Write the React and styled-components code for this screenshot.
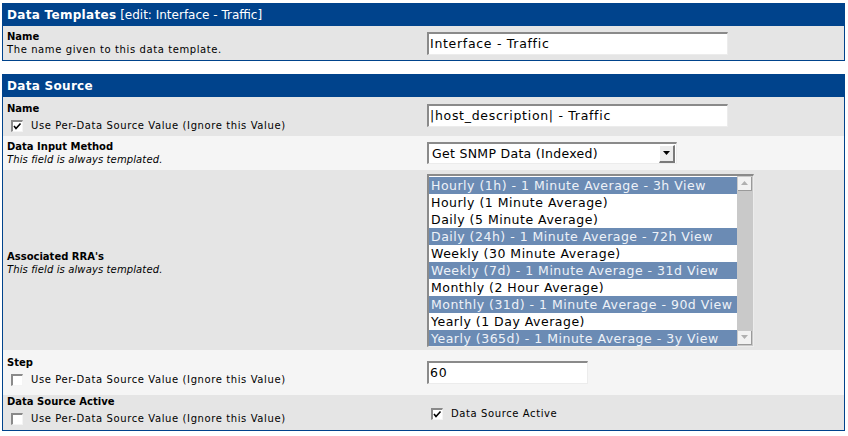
import React from "react";
import styled, { createGlobalStyle } from "styled-components";

const Global = createGlobalStyle`
  html, body { margin: 0; padding: 0; background: #fff; }
  body { font-family: "DejaVu Sans", Verdana, sans-serif; color: #000; }
`;

const Page = styled.div`
  padding: 3px 3px 0 2px;
  display: flex;
  flex-direction: column;
  gap: 13px;
`;

const Panel = styled.div`
  border: 1px solid #00438c;
  display: flex;
  flex-direction: column;
`;

const Header = styled.div`
  background: #00438c;
  color: #fff;
  height: 22px;
  line-height: 22px;
  padding-left: 4px;
  font-size: 12px;
  white-space: nowrap;
  b { font-weight: bold; letter-spacing: 0.3px; }
`;

const Row = styled.div`
  display: grid;
  grid-template-columns: 421px 1fr;
  background: ${(p) => (p.$light ? "#f5f5f5" : "#e5e5e5")};
  height: ${(p) => p.$h}px;
`;

const LabelCell = styled.div`
  padding: ${(p) => p.$pt || 5}px 0 0 4px;
  display: flex;
  flex-direction: column;
  justify-content: ${(p) => (p.$center ? "center" : "flex-start")};
  font-size: 10px;
  line-height: 12px;
`;

const FieldCell = styled.div`
  display: flex;
  align-items: ${(p) => p.$align || "center"};
  padding-left: 3px;
  padding-top: ${(p) => p.$pt || 0}px;
`;

const Title = styled.div`
  font-weight: bold;
`;

const Desc = styled.div`
  font-style: ${(p) => (p.$italic ? "italic" : "normal")};
  letter-spacing: ${(p) => (p.$italic ? "0.12px" : "0.6px")};
  margin-top: 1px;
`;

const CheckLine = styled.label`
  display: flex;
  align-items: center;
  gap: 8px;
  margin: ${(p) => p.$m || "5px 0 0 4px"};
  font-size: 10px;
  letter-spacing: 0.6px;
`;

const Box = styled.span`
  width: 9px;
  height: 9px;
  display: inline-flex;
  align-items: center;
  justify-content: center;
  background: #fff;
  border-top: 2px solid #8a8a8a;
  border-left: 2px solid #8a8a8a;
  border-right: 1px solid #f4f4f4;
  border-bottom: 1px solid #f4f4f4;
`;

const TextInput = styled.div`
  width: ${(p) => p.$w}px;
  height: 20px;
  box-sizing: content-box;
  background: #fff;
  border-top: 2px solid #8a8a8a;
  border-left: 2px solid #8a8a8a;
  border-right: 1px solid #ececec;
  border-bottom: 1px solid #ececec;
  font-size: 12.5px;
  letter-spacing: 0.7px;
  line-height: 20px;
  padding-left: 1px;
  white-space: nowrap;
  overflow: hidden;
`;

const Select = styled.div`
  width: 244px;
  height: 19px;
  display: flex;
  align-items: center;
  justify-content: space-between;
  background: #fff;
  border-top: 2px solid #8a8a8a;
  border-left: 2px solid #8a8a8a;
  border-right: 1px solid #ececec;
  border-bottom: 1px solid #ececec;
  font-size: 12.5px;
  letter-spacing: 0.3px;
  padding-left: 3px;
`;

const DropBtn = styled.span`
  width: 13px;
  height: 15px;
  margin-right: 1px;
  display: flex;
  align-items: center;
  justify-content: center;
  background: #ececec;
  border-top: 1px solid #fff;
  border-left: 1px solid #fff;
  border-right: 2px solid #7a7a7a;
  border-bottom: 2px solid #7a7a7a;
`;

const ListBox = styled.div`
  width: 324px;
  height: 170px;
  display: flex;
  background: #fff;
  border-top: 2px solid #8a8a8a;
  border-left: 2px solid #8a8a8a;
  border-right: 1px solid #ececec;
  border-bottom: 1px solid #ececec;
`;

const Options = styled.div`
  flex: 1;
  padding-top: 1px;
  display: flex;
  flex-direction: column;
  overflow: hidden;
`;

const Option = styled.div`
  height: 17px;
  line-height: 17px;
  font-size: 12.5px;
  letter-spacing: 0.5px;
  padding-left: 2px;
  white-space: nowrap;
  background: ${(p) => (p.$sel ? "#6b8bb4" : "#fff")};
  color: ${(p) => (p.$sel ? "#eef2f8" : "#000")};
`;

const Scroll = styled.div`
  width: 16px;
  flex: none;
  background: #c9c9c9;
  display: flex;
  flex-direction: column;
  justify-content: space-between;
  padding: 1px 0 1px 1px;
  box-sizing: border-box;
`;

const ScrollBtn = styled.span`
  width: 13px;
  height: 13px;
  background: #f2f2f2;
  border-right: 1px solid #9a9a9a;
  border-bottom: 1px solid #9a9a9a;
  display: flex;
  align-items: center;
  justify-content: center;
`;

const Check = () => (
  <svg width="9" height="9" viewBox="0 0 9 9">
    <path d="M1 4 L3 6.5 L7.5 1.5" fill="none" stroke="#000" strokeWidth="1.6" />
  </svg>
);

const Tri = ({ up, color = "#000", w = 7 }) => (
  <svg width={w} height="4" viewBox="0 0 7 4">
    <path d={up ? "M0 4 L3.5 0 L7 4 Z" : "M0 0 L7 0 L3.5 4 Z"} fill={color} />
  </svg>
);

const CheckBox = ({ checked }) => <Box>{checked ? <Check /> : null}</Box>;

const rras = [
  ["Hourly (1h) - 1 Minute Average - 3h View", true],
  ["Hourly (1 Minute Average)", false],
  ["Daily (5 Minute Average)", false],
  ["Daily (24h) - 1 Minute Average - 72h View", true],
  ["Weekly (30 Minute Average)", false],
  ["Weekly (7d) - 1 Minute Average - 31d View", true],
  ["Monthly (2 Hour Average)", false],
  ["Monthly (31d) - 1 Minute Average - 90d View", true],
  ["Yearly (1 Day Average)", false],
  ["Yearly (365d) - 1 Minute Average - 3y View", true],
];

export default function App() {
  return (
    <>
      <Global />
      <Page>
        <Panel>
          <Header>
            <b>Data Templates</b> [edit: Interface - Traffic]
          </Header>
          <Row $h={34}>
            <LabelCell>
              <Title>Name</Title>
              <Desc>The name given to this data template.</Desc>
            </LabelCell>
            <FieldCell>
              <TextInput $w={297}>Interface - Traffic</TextInput>
            </FieldCell>
          </Row>
        </Panel>

        <Panel>
          <Header>
            <b>Data Source</b>
          </Header>
          <Row $h={39}>
            <LabelCell $pt={6}>
              <Title>Name</Title>
              <CheckLine>
                <CheckBox checked />
                Use Per-Data Source Value (Ignore this Value)
              </CheckLine>
            </LabelCell>
            <FieldCell $align="flex-start" $pt={7}>
              <TextInput $w={297}>|host_description| - Traffic</TextInput>
            </FieldCell>
          </Row>
          <Row $h={34} $light>
            <LabelCell>
              <Title>Data Input Method</Title>
              <Desc $italic>This field is always templated.</Desc>
            </LabelCell>
            <FieldCell>
              <Select>
                Get SNMP Data (Indexed)
                <DropBtn>
                  <Tri />
                </DropBtn>
              </Select>
            </FieldCell>
          </Row>
          <Row $h={180}>
            <LabelCell $center $pt={6}>
              <Title>Associated RRA's</Title>
              <Desc $italic>This field is always templated.</Desc>
            </LabelCell>
            <FieldCell>
              <ListBox>
                <Options>
                  {rras.map(([t, s]) => (
                    <Option key={t} $sel={s}>
                      {t}
                    </Option>
                  ))}
                </Options>
                <Scroll>
                  <ScrollBtn>
                    <Tri up color="#b0b0b0" />
                  </ScrollBtn>
                  <ScrollBtn>
                    <Tri color="#b0b0b0" />
                  </ScrollBtn>
                </Scroll>
              </ListBox>
            </FieldCell>
          </Row>
          <Row $h={45} $light>
            <LabelCell $pt={7}>
              <Title>Step</Title>
              <CheckLine>
                <CheckBox />
                Use Per-Data Source Value (Ignore this Value)
              </CheckLine>
            </LabelCell>
            <FieldCell>
              <TextInput $w={157}>60</TextInput>
            </FieldCell>
          </Row>
          <Row $h={35}>
            <LabelCell $pt={1}>
              <Title>Data Source Active</Title>
              <CheckLine>
                <CheckBox />
                Use Per-Data Source Value (Ignore this Value)
              </CheckLine>
            </LabelCell>
            <FieldCell>
              <CheckLine $m="2px 0 0 4px">
                <CheckBox checked />
                Data Source Active
              </CheckLine>
            </FieldCell>
          </Row>
        </Panel>
      </Page>
    </>
  );
}
